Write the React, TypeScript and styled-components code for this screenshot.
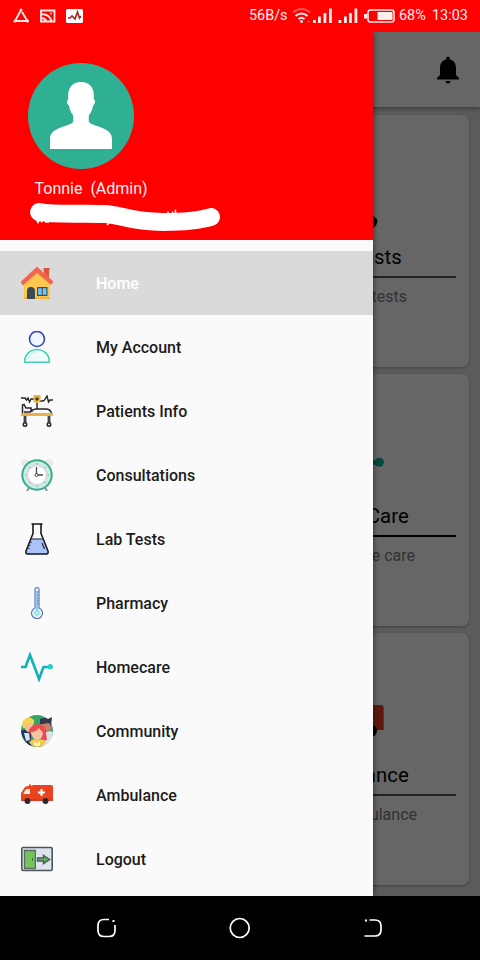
import React from "react";
import styled, { createGlobalStyle } from "styled-components";

const Global = createGlobalStyle`
  * { box-sizing: border-box; }
  body { margin: 0; background: #000; font-family: Roboto, "Liberation Sans", sans-serif; }
`;

const Phone = styled.div`
  width: 480px;
  height: 960px;
  display: flex;
  flex-direction: column;
  overflow: hidden;
`;

const StatusBar = styled.header`
  height: 32px;
  flex: none;
  display: flex;
  align-items: center;
  justify-content: space-between;
  padding: 0 11px 0 13px;
  background: #fe0000;
  color: #fff0f0;
  font-size: 14.4px;
  line-height: 32px;
`;

const StatusText = styled.span<{ $w: number }>`
  width: ${(p) => p.$w}px;
  white-space: nowrap;
`;

const StatusGroup = styled.div`
  display: flex;
  align-items: center;
  svg { display: block; flex: none; }
`;

const Stage = styled.main`
  position: relative;
  height: 864px;
  flex: none;
  overflow: hidden;
`;

const Page = styled.div`
  height: 100%;
  background: #e3e3e3;
`;

const Toolbar = styled.div`
  height: 75px;
  display: flex;
  justify-content: flex-end;
  align-items: center;
  padding-right: 20px;
  background: #fff;
  box-shadow: 0 2px 4px rgba(0, 0, 0, 0.3);
`;

const Cards = styled.div`
  display: flex;
  flex-direction: column;
  align-items: flex-end;
  gap: 7px;
  padding: 8px 11px 0 0;
`;

const Card = styled.section`
  width: 220px;
  height: 252px;
  padding: 76px 13px 0;
  border-radius: 7px;
  background: #fff;
  box-shadow: 0 1px 3px rgba(0, 0, 0, 0.28);
`;

const CardArt = styled.div`
  height: 48px;
  display: flex;
  justify-content: center;
`;

const CardTitle = styled.h2<{ $inset: number; $line: string; $thick?: boolean }>`
  margin: 0;
  height: 39px;
  padding-right: ${(p) => p.$inset}px;
  border-bottom: 2px solid ${(p) => p.$line};
  text-align: right;
  font-size: 20.4px;
  letter-spacing: 0.1px;
  font-weight: 400;
  line-height: 36px;
  color: #000;
`;

const CardNote = styled.p<{ $inset: number }>`
  margin: 9px 0 0;
  padding-right: ${(p) => p.$inset}px;
  text-align: right;
  font-size: 16px;
  line-height: 20px;
  color: #7e7e7e;
`;

const Scrim = styled.div`
  position: absolute;
  inset: 0;
  background: rgba(0, 0, 0, 0.6);
`;

const Drawer = styled.aside`
  position: absolute;
  inset: 0 auto 0 0;
  width: 373px;
  background: #fafafa;
  box-shadow: 1px 0 5px rgba(0, 0, 0, 0.45);
`;

const Profile = styled.div`
  height: 208px;
  padding: 31px 0 0 28px;
  background: #fe0000;
  svg { display: block; }
`;

const UserName = styled.div`
  margin: 9px 0 0 6.5px;
  height: 20px;
  line-height: 20px;
  font-size: 16px;
  white-space: pre;
  color: #fff0f0;
`;

const Menu = styled.nav`
  padding-top: 11px;
`;

const MenuItem = styled.div<{ $active?: boolean }>`
  height: 64px;
  display: flex;
  align-items: center;
  gap: 43px;
  padding-left: 21px;
  font-size: 16px;
  font-weight: 500;
  color: ${(p) => (p.$active ? "#fff" : "#1c1c1c")};
  background: ${(p) => (p.$active ? "#dadada" : "transparent")};
  svg { display: block; }
`;

const NavBar = styled.footer`
  height: 64px;
  flex: none;
  display: grid;
  grid-template-columns: 24px 24px 24px;
  justify-content: center;
  align-items: center;
  gap: 109px;
  background: #000;
`;

const Icon = ({ children }: { children: React.ReactNode }) => (
  <svg width="32" height="32" viewBox="0 0 32 32" fill="none">{children}</svg>
);

const HomeIcon = () => (
  <Icon>
    <path d="M23 2h5v11l-5-4z" fill="#e0573f" />
    <path d="M22.500 1h6v2.500h-6z" fill="#d9503d" />
    <path d="M3 16 16 4l13 12v16H3z" fill="#fdc74d" />
    <path d="M3 30h26v2H3z" fill="#f2b544" />
    <path d="M16 0 0 15l2 3L16 5.500l14 12 2-3z" fill="#f2644d" stroke="#f2644d" strokeWidth=".8" />
    <path d="M6 32v-8a4 4 0 0 1 8 0v8z" fill="#3b4856" />
    <path d="M16 20h10.500v9H16z" fill="#37516a" />
    <path d="M17.200 21.200h3.500v6.600h-3.500zM21.800 21.200h3.500v6.600h-3.500z" fill="#72c8f3" />
  </Icon>
);

const AccountIcon = () => (
  <Icon>
    <circle cx="16" cy="8" r="7.500" stroke="#2d48b4" strokeWidth="1.600" fill="#f1f5ff" />
    <path d="M3.700 31.200V30a12.300 11.500 0 0 1 24.600 0v1.200z" fill="#f0faf8" stroke="#43d2b5" strokeWidth="1.600" />
    <path d="M7 28c1-4 4-6 7-7" stroke="#b8efe4" />
  </Icon>
);

const BedIcon = () => (
  <Icon>
    <path d="M0 3h4l1.500 2L7 3l1.500 4L10 4h3M19 6h3l1.500-1L26 1l1.500 6 1.500-2h3" stroke="#24242a" strokeWidth="1.400" />
    <path d="M12.500 0h7v6.500l-3.500 2-3.500-2z" fill="#eab246" />
    <path d="M14.500 2.500h3v2L16 6l-1.500-1.500z" fill="#423426" />
    <path d="M16 8v6" stroke="#332f35" strokeWidth="1.500" />
    <path d="M1.500 18v-8l1.500-.5L5 13h5v4M3 17h7M11 17v-2l4-1h10q4 0 5.500 4" stroke="#27232a" strokeWidth="1.500" />
    <path d="M0 18h32v3H0z" fill="#eab246" />
    <path d="M4 21v7M28 21v7" stroke="#434047" strokeWidth="2.800" />
    <circle cx="4" cy="29.500" r="1.800" fill="#ddd" stroke="#27232a" strokeWidth="1.400" />
    <circle cx="28" cy="29.500" r="1.800" fill="#ddd" stroke="#27232a" strokeWidth="1.400" />
  </Icon>
);

const ClockIcon = () => (
  <Icon>
    <circle cx="4" cy="4" r="4" fill="#e8eaec" />
    <circle cx="28" cy="4" r="4" fill="#e8eaec" />
    <path d="m8 29-2 3M24 29l2 3" stroke="#777f85" strokeWidth="1.600" />
    <circle cx="16" cy="16" r="14.700" fill="#c9eee2" stroke="#34ae8d" strokeWidth="2" />
    <circle cx="16" cy="16" r="10" fill="#fff" stroke="#dadbe2" strokeWidth="2.500" />
    <path d="M16 4v1.500M16 26.500V28M4 16h1.500M26.500 16H28M8 8l1 1M23 23l1 1M8 24l1-1M23 9l1-1" stroke="#64b89f" />
    <path d="M15.500 8v8H22" stroke="#45494f" strokeWidth="1.300" />
    <circle cx="15.500" cy="16" r="1.500" fill="#fff" stroke="#45494f" />
  </Icon>
);

const FlaskIcon = () => (
  <Icon>
    <path d="M10.500 16h11l5.500 14-1 1.500H6L5 30z" fill="#a9c3fa" />
    <path d="M10.500 1h11M12 1.500v9L5 28q-.7 3 2 3h18q2.700 0 2-3L20 10.500v-9" stroke="#17191f" strokeWidth="1.600" strokeLinejoin="round" />
    <path d="M10 16h12" stroke="#3e4a68" strokeWidth="1.300" />
    <path d="m9.300 19 1.500.5M8 22l1.500.5M7 25l1.500.5M21 20l2.500 6" stroke="#263457" strokeWidth="1.300" />
  </Icon>
);

const ThermometerIcon = () => (
  <Icon>
    <path d="M14 21V2.500a2 2 0 0 1 4 0V21a5.500 5.500 0 1 1-4 0z" fill="#ddf4fb" stroke="#6876bf" strokeWidth="1.200" />
    <path d="M16 4v20" stroke="#66bada" strokeWidth="1.300" />
    <path d="M16 5h2M16 8h2M16 11h2M16 14h2M16 17h2" stroke="#6273b4" strokeWidth=".8" />
    <circle cx="16" cy="26" r="2.300" fill="#bdf4e6" stroke="#78d9cb" />
  </Icon>
);

const Pulse = () => (
  <>
    <path d="M0 16h4.500L9 4l9 24 4.500-12H28" stroke="#0fb1b4" strokeWidth="2.600" />
    <circle cx="29.300" cy="15.700" r="2.600" fill="#1fd2c4" />
  </>
);

const CommunityIcon = () => (
  <Icon>
    <circle cx="16" cy="16" r="16" fill="#37a568" />
    <path d="M0 16q4-3 10 0v15Q2 27 0 16z" fill="#24365d" />
    <path d="M3 18h5l1 7-4 1z" fill="#d8e2ed" />
    <path d="M20 16q8-1 12 1-1 11-10 14z" fill="#dbe1e7" />
    <path d="M3 7h9v6q-1 4-5 4-4-2-4-7z" fill="#f4bd98" />
    <path d="M2 13Q0 6 4 4q4-4 9 1v4q-5 1-8-1l-1 5z" fill="#f6d44e" />
    <path d="M21 7h9v6q-1 5-5 4-3-2-4-6z" fill="#c9806a" />
    <path d="M19 9V4q5-2 8 0l4-2-1 9-2-3-7 1z" fill="#33374a" />
    <path d="M8 15q3-6 10-6 8 2 7 9l1 7-5 1-3-7-8 1q-2-2-2-5z" fill="#ee4b50" />
    <path d="M10 17q5 0 8-4l4 5q-1 7-6 7-5-1-6-8z" fill="#f8c3a2" />
    <path d="M8 27q4-4 8-2 5-2 9 2-1 4-9 5-6-1-8-5z" fill="#f5cc44" />
    <path d="m13 26 3 2 3-2v5h-6z" fill="#fff0c5" />
  </Icon>
);

const Ambulance = () => (
  <>
    <path d="M12 6h18q2 0 2 2v14H0v-8l4-6q1-1 4-1V5.500h2V7z" fill="#e9421f" />
    <path d="m2 15 3-5h4v5z" fill="#ffece5" />
    <path d="M20.500 10v7M17 13.500h7" stroke="#fff" strokeWidth="2" />
    <path d="M0 20h32v2H0z" fill="#d63d22" />
    <circle cx="6.500" cy="22" r="3" fill="#292a30" /><circle cx="24.500" cy="22" r="3" fill="#292a30" />
  </>
);

const LogoutIcon = () => (
  <Icon>
    <rect x=".8" y="4.500" width="30.400" height="23" rx="1.500" fill="#dce4ed" stroke="#4c5359" strokeWidth="1.600" />
    <path d="M3.500 7.500h10.800v18H3.500z" fill="#76c55b" stroke="#5a6a63" strokeWidth="1.300" />
    <path d="M11.500 15v3" stroke="#3f6b36" />
    <path d="M16.500 15h6v-2.500l6 4-6 4V18h-6z" fill="#64b15b" stroke="#486052" strokeWidth="1.500" />
  </Icon>
);

const items = [
  { label: "Home", icon: <HomeIcon />, active: true },
  { label: "My Account", icon: <AccountIcon /> },
  { label: "Patients Info", icon: <BedIcon /> },
  { label: "Consultations", icon: <ClockIcon /> },
  { label: "Lab Tests", icon: <FlaskIcon /> },
  { label: "Pharmacy", icon: <ThermometerIcon /> },
  { label: "Homecare", icon: <Icon><Pulse /></Icon> },
  { label: "Community", icon: <CommunityIcon /> },
  { label: "Ambulance", icon: <Icon><Ambulance /></Icon> },
  { label: "Logout", icon: <LogoutIcon /> },
];

const StatusIcons = () => (
  <svg width="72" height="18" viewBox="0 0 72 18" fill="none" stroke="#ffe9e6">
    <path d="m8 3-6 11h12.500L9 5" strokeWidth="1.900" />
    <circle cx="8" cy="3" r="1.500" fill="#ffe9e6" stroke="none" />
    <circle cx="2" cy="14" r="1.500" fill="#ffe9e6" stroke="none" />
    <circle cx="14.500" cy="14" r="1.500" fill="#ffe9e6" stroke="none" />
    <path d="M28 3.500h13.500v11H28zM28 7q9 0 10.500 7.500M28 11q4 0 5.500 3.500" strokeWidth="1.800" />
    <circle cx="38" cy="6.500" r="1" fill="#ffe9e6" stroke="none" />
    <rect x="53" y="2" width="17" height="14" rx="1.500" fill="#fff" stroke="none" />
    <path d="M55 11h2l2-2 3 3 2.500-7 2 6 1.500-2" stroke="#a9251e" strokeWidth="1.600" />
  </svg>
);

const SignalIcons = () => (
  <svg width="108" height="20" viewBox="0 0 108 20" fill="#fff0ee">
    <g fill="none" stroke="#fff0ee" strokeWidth="1.900">
      <path d="M2 6.500q9-7 17 0" opacity=".35" />
      <path d="M4.500 10q6-5 12 0" /><path d="M7.500 13q3-2.500 6 0" />
    </g>
    <circle cx="10.500" cy="15.500" r="1.500" />
    <circle cx="17.500" cy="15.500" r=".8" opacity=".6" />
    <path d="M22 14h2.800v3H22zM27 10.500h2.800V17H27zM32.500 7h2.800v10h-2.800zM38 2.500h2.800V17H38zM47.500 14h2.800v3h-2.800zM53 10.500h2.800V17H53zM58 7h2.800v10H58zM63.500 2.500h2.800V17h-2.800z" />
    <path d="M73 8h3v4.500h-3z" />
    <rect x="77" y="4" width="26" height="12" rx="2.500" fill="none" stroke="#fff0ee" strokeWidth="1.500" />
    <path d="M86.500 6h15v8h-15z" />
  </svg>
);

const Avatar = () => (
  <svg width="106" height="107" viewBox="0 0 106 107">
    <circle cx="53" cy="53" r="53" fill="#30b092" />
    <path d="M53 19c8 0 13 5 12.800 14v3.500c2.400 1.200.8 5-.7 6-1 5-2.700 8-4.300 10v6c1.500 5 23.200 5 23.200 17v10.500H22V75.500c0-12 21.700-12 23.200-17v-6c-1.600-2-3.300-5-4.300-10-1.500-1-3.100-4.800-.7-6V33C40 24 45 19 53 19z" fill="#fff" />
  </svg>
);

const Redaction = () => (
  <svg width="200" height="36" viewBox="28 199 200 36" fill="none">
    <path d="M39 212c17 3 43 1 66 2 15 .5 25 8 58 8 18 0 35-1 48-5" stroke="#fff" strokeWidth="18" strokeLinecap="round" strokeLinejoin="round" />
    <path d="m36 219 2 3.500 2-3.500 2 3.500M45 222h4M107 225l4-4M168 214v-2.500M172.500 213v-1.500M175.500 214v-4.500" stroke="#fff" strokeWidth="1.500" />
  </svg>
);

export default function App() {
  return (
    <>
      <Global />
      <Phone>
        <StatusBar>
          <StatusIcons />
          <StatusGroup>
            <StatusText $w={42}>56B/s</StatusText>
            <SignalIcons />
            <StatusText $w={33}>68%</StatusText>
            <StatusText $w={37}>13:03</StatusText>
          </StatusGroup>
        </StatusBar>
        <Stage>
          <Page>
            <Toolbar>
              <svg width="24" height="28" viewBox="0 0 24 28">
                <path d="M10 3.500V2.800a2 2 0 0 1 4 0v.7c4.200 1 6 4.500 6 8.500v7l3 3v1.500H1V22l3-3v-7c0-4 1.800-7.500 6-8.500zM9.500 25h5q-.5 2.500-2.500 2.500T9.500 25z" />
              </svg>
            </Toolbar>
            <Cards>
              <Card>
                <CardArt>
                  <svg width="50" height="50" viewBox="0 0 32 32">
                    <path d="M11 2h10v10l6.500 6q.8 2-.6 4l-2 2H7l-3-4 7-9z" />
                  </svg>
                </CardArt>
                <CardTitle $inset={54} $line="#555">Lab Tests</CardTitle>
                <CardNote $inset={49}>Lab tests</CardNote>
              </Card>
              <Card>
                <CardArt>
                  <svg width="50" height="50" viewBox="0 0 32 32" fill="none" overflow="visible">
                    <g transform="translate(-1 -8)">
                      <path d="M10 16h20" stroke="#0fb1a0" strokeWidth="3" />
                      <circle cx="30" cy="15.800" r="2.900" fill="#12b39c" />
                    </g>
                  </svg>
                </CardArt>
                <CardTitle $inset={47} $line="#000">Home Care</CardTitle>
                <CardNote $inset={41}>Home care</CardNote>
              </Card>
              <Card>
                <CardArt>
                  <svg width="50" height="50" viewBox="0 0 32 32" overflow="visible">
                    <g transform="translate(0 -8.500)">
                      <path d="M5 6h25q1.800 0 1.800 2v14H5z" fill="#e9421f" />
                      <circle cx="23.500" cy="22.500" r="4" />
                    </g>
                  </svg>
                </CardArt>
                <CardTitle $inset={47} $line="#555">Ambulance</CardTitle>
                <CardNote $inset={39}>Ambulance</CardNote>
              </Card>
            </Cards>
          </Page>
          <Scrim />
          <Drawer>
            <Profile>
              <Avatar />
              <UserName>{"Tonnie  (Admin)"}</UserName>
              <Redaction />
            </Profile>
            <Menu>
              {items.map((item) => (
                <MenuItem key={item.label} $active={item.active}>
                  {item.icon}
                  {item.label}
                </MenuItem>
              ))}
            </Menu>
          </Drawer>
        </Stage>
        <NavBar>
          <svg width="24" height="24" viewBox="0 0 24 24" fill="none" stroke="#fff" strokeWidth="1.700">
            <path d="M14 3.500H9q-6 0-6 6v5q0 6 6 6h5q6 0 6-6V9" />
            <path d="M17.500 4h2v2h-2z" fill="#fff" stroke="none" />
          </svg>
          <svg width="24" height="24" viewBox="0 0 24 24" fill="none" stroke="#fff" strokeWidth="1.700">
            <circle cx="11.700" cy="12" r="9.500" />
          </svg>
          <svg width="24" height="24" viewBox="0 0 24 24" fill="none" stroke="#fff" strokeWidth="1.700">
            <path d="M8.500 4H14q6 0 6 6v4q0 6-6 6H3.500" />
            <path d="M4 3.500h2v2H4z" fill="#fff" stroke="none" />
          </svg>
        </NavBar>
      </Phone>
    </>
  );
}
